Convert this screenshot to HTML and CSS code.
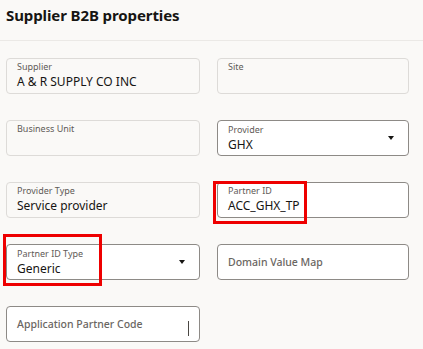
FILE: index.html
```html
<!DOCTYPE html>
<html lang="en">
<head>
  <meta charset="UTF-8" />
  <meta name="viewport" content="width=device-width, initial-scale=1.0"/>
  <title>Supplier B2B properties</title>
  <link rel="stylesheet" href="styles.css">
</head>
<body>

  <div class="header">
    <h1 class="title">Supplier B2B properties</h1>
  </div>

  <div class="form-grid">
    <div class="field readonly">
      <span class="label">Supplier</span>
      <span class="value">A &amp; R SUPPLY CO INC</span>
    </div>
    <div class="field readonly">
      <span class="label">Site</span>
    </div>

    <div class="field readonly">
      <span class="label">Business Unit</span>
    </div>
    <div class="field select">
      <div class="field-text">
        <span class="label">Provider</span>
        <span class="value">GHX</span>
      </div>
      <span class="caret"></span>
    </div>

    <div class="field readonly">
      <span class="label">Provider Type</span>
      <span class="value">Service provider</span>
    </div>
    <div class="field">
      <span class="label">Partner ID</span>
      <span class="value">ACC_GHX_TP</span>
      <div class="highlight hl-partner-id"></div>
    </div>

    <div class="field select">
      <div class="field-text">
        <span class="label">Partner ID Type</span>
        <span class="value">Generic</span>
      </div>
      <span class="caret"></span>
      <div class="highlight hl-partner-type"></div>
    </div>
    <div class="field empty">
      <span class="placeholder">Domain Value Map</span>
    </div>

    <div class="field empty">
      <span class="placeholder">Application Partner Code</span>
      <span class="text-cursor"></span>
    </div>
  </div>

</body>
</html>
```

FILE: styles.css
```css
/* Reset & Base Styles */
* {
  margin: 0;
  padding: 0;
  box-sizing: border-box;
}

body {
  font-family: "Noto Sans", "Open Sans", sans-serif;
  background: #faf9f7;
  color: #161513;
  width: 423px;
  height: 349px;
  overflow: hidden;
}

.header {
  height: 41px;
  padding: 5px 6px 0;
  border-bottom: 1px solid #ebe9e6;
}

.title {
  font-size: 15px;
  font-weight: bold;
  color: #161513;
  letter-spacing: -0.1px;
}

.form-grid {
  display: grid;
  grid-template-columns: 194px 192px;
  column-gap: 17px;
  row-gap: 26px;
  padding: 17px 0 0 6px;
}

.field {
  position: relative;
  height: 36px;
  padding: 2px 10px 0;
  background: #fff;
  border: 1px solid #8d8a86;
  border-radius: 4px;
  display: flex;
  flex-direction: column;
}

.field.readonly {
  background: #faf9f7;
  border-color: #dddbd8;
}

.field.select {
  flex-direction: row;
  align-items: center;
  justify-content: space-between;
  padding-top: 0;
  padding-right: 14px;
}

.field-text {
  display: flex;
  flex-direction: column;
  padding-top: 1px;
}

.field.empty {
  justify-content: center;
  padding-top: 0;
}

.label {
  font-size: 9px;
  line-height: 12.5px;
  color: #5f5b57;
}

.value {
  font-size: 12px;
  line-height: 16.5px;
  color: #161513;
}

.placeholder {
  font-size: 10.5px;
  font-weight: 500;
  color: #6a6662;
}

.caret {
  width: 0;
  height: 0;
  border-left: 3.5px solid transparent;
  border-right: 3.5px solid transparent;
  border-top: 4px solid #161513;
}

.text-cursor {
  position: absolute;
  left: 181px;
  top: 14px;
  width: 1px;
  height: 15px;
  background: #4a4743;
}

.highlight {
  position: absolute;
  border: 3px solid #ee0000;
}

.hl-partner-id {
  left: -5px;
  top: -2px;
  width: 94px;
  height: 43px;
}

.hl-partner-type {
  left: -4px;
  top: -11px;
  width: 99px;
  height: 52px;
}
```
